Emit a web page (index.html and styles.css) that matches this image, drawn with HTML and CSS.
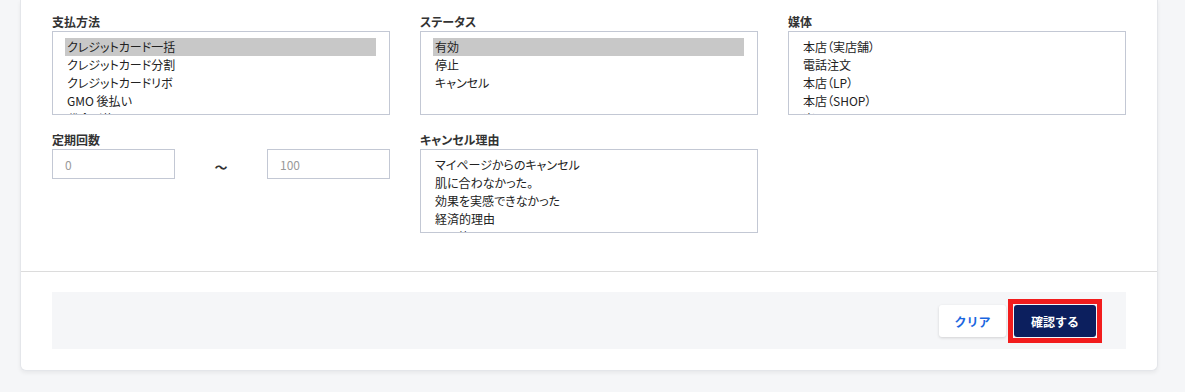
FILE: index.html
```html
<!DOCTYPE html>
<html lang="ja">

<head>
    <meta charset="UTF-8">
    <meta name="viewport" content="width=device-width, initial-scale=1.0">
    <title>定期購入検索</title>
    <link rel="stylesheet" href="styles.css">
</head>

<body>

    <div class="card">
        <div class="search-grid">
            <div class="field">
                <label class="field-label">支払方法</label>
                <select class="multi-select" multiple size="5">
                    <option selected>クレジットカード一括</option>
                    <option>クレジットカード分割</option>
                    <option>クレジットカードリボ</option>
                    <option>GMO 後払い</option>
                    <option>代金引換</option>
                </select>
            </div>

            <div class="field">
                <label class="field-label">ステータス</label>
                <select class="multi-select" multiple size="5">
                    <option selected>有効</option>
                    <option>停止</option>
                    <option>キャンセル</option>
                </select>
            </div>

            <div class="field">
                <label class="field-label">媒体</label>
                <select class="multi-select" multiple size="5">
                    <option>本店（実店舗）</option>
                    <option>電話注文</option>
                    <option>本店（LP）</option>
                    <option>本店（SHOP）</option>
                    <option>楽天</option>
                </select>
            </div>

            <div class="field">
                <label class="field-label">定期回数</label>
                <div class="range">
                    <input type="text" class="text-input" placeholder="0">
                    <span class="range-sep">〜</span>
                    <input type="text" class="text-input" placeholder="100">
                </div>
            </div>

            <div class="field">
                <label class="field-label">キャンセル理由</label>
                <select class="multi-select" multiple size="5">
                    <option>マイページからのキャンセル</option>
                    <option>肌に合わなかった。</option>
                    <option>効果を実感できなかった</option>
                    <option>経済的理由</option>
                    <option>その他</option>
                </select>
            </div>
        </div>

        <div class="card-footer">
            <div class="actions">
                <button class="btn btn-clear">クリア</button>
                <button class="btn btn-submit">確認する</button>
            </div>
        </div>
    </div>

</body>

</html>
```

FILE: styles.css
```css
/* 検索フォーム */
body {
    font-family: "Noto Sans CJK JP", "Noto Sans", sans-serif;
    font-feature-settings: "palt";
    background-color: #f5f6f8;
    color: #222222;
    margin: 0;
    padding: 0 27px 22px 20px;
}

.card {
    background-color: #ffffff;
    border: 1px solid #e4e6ea;
    border-top: none;
    border-radius: 0 0 6px 6px;
    box-shadow: 0 2px 4px rgba(0, 0, 0, 0.06);
}

.search-grid {
    display: grid;
    grid-template-columns: repeat(3, 338px);
    column-gap: 30px;
    row-gap: 16px;
    padding: 13px 31px 38px 31px;
}

.field-label {
    display: block;
    font-size: 12px;
    font-weight: bold;
    line-height: 18px;
    color: #333333;
}

.multi-select {
    display: block;
    width: 100%;
    height: 84px;
    box-sizing: border-box;
    border: 1px solid #c3c8d4;
    border-radius: 0;
    padding: 6px 13px 6px 12px;
    font-family: inherit;
    font-feature-settings: "palt";
    font-size: 12px;
    color: #222222;
    background-color: #ffffff;
    overflow: hidden;
    scrollbar-width: none;
    outline: none;
}

.multi-select option {
    padding: 0 2px;
    line-height: 18px;
    height: 18px;
}

.multi-select option:checked {
    background: #c8c8c8;
    color: #222222;
}

.range {
    display: flex;
    align-items: center;
    justify-content: space-between;
}

.text-input {
    width: 123px;
    height: 30px;
    box-sizing: border-box;
    border: 1px solid #c3c8d4;
    border-radius: 0;
    padding: 0 12px;
    font-family: inherit;
    font-size: 12px;
}

.text-input::placeholder {
    color: #9a9a9a;
}

.range-sep {
    font-size: 13px;
    font-weight: bold;
    color: #333333;
    padding-top: 4px;
}

.card-footer {
    border-top: 1px solid #dcdcdc;
    padding: 20px 31px 21px 31px;
}

.actions {
    background-color: #f5f6f8;
    display: flex;
    justify-content: flex-end;
    align-items: center;
    gap: 8px;
    padding: 13px 30px 12px 0;
}

.btn {
    height: 32px;
    border: none;
    border-radius: 3px;
    font-family: inherit;
    font-size: 12px;
    font-weight: bold;
    cursor: pointer;
}

.btn-clear {
    width: 67px;
    background-color: #ffffff;
    color: #1a66e0;
    box-shadow: 0 1px 3px rgba(0, 0, 0, 0.15);
}

.btn-submit {
    position: relative;
    width: 82px;
    background-color: #0c1f5e;
    color: #ffffff;
}

/* 強調枠 */
.btn-submit::after {
    content: "";
    position: absolute;
    top: -6px;
    left: -6px;
    right: -6px;
    bottom: -6px;
    border: 5px solid #f21d1d;
}
```
